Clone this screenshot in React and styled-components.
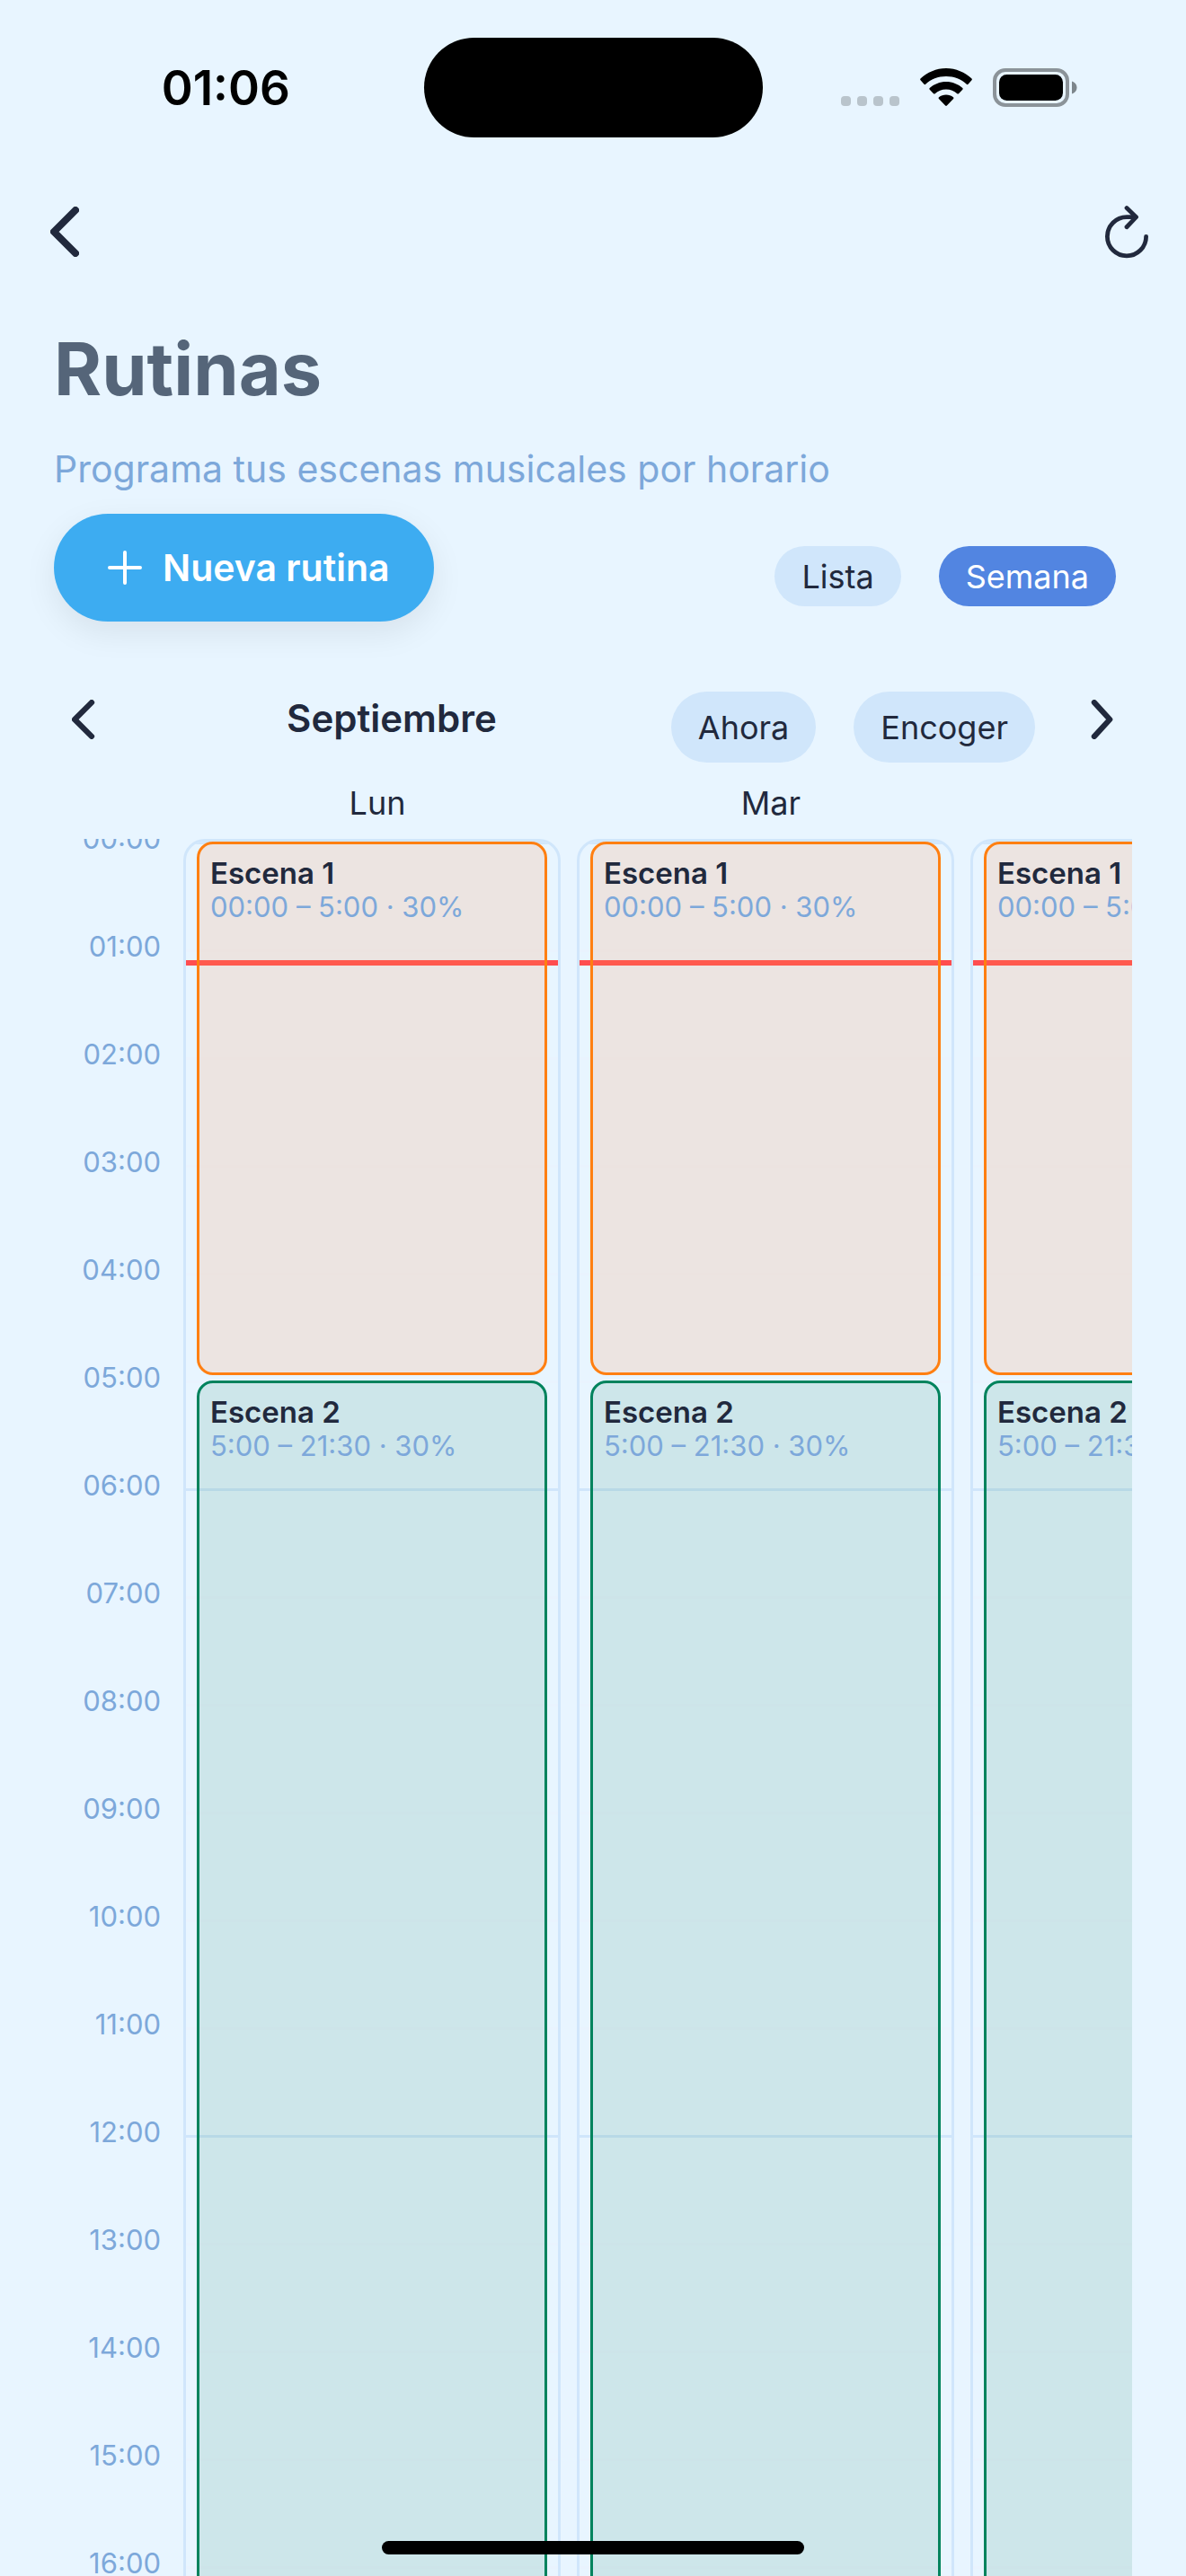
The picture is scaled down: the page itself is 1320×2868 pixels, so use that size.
import React, { useState } from "react";
import styled, { createGlobalStyle } from "styled-components";

const HOUR = 120;
const INK = "#21293d";
const SOFT = "#7da8da";
const LINE = "#d0e6fb";

const DAYS = ["Lun", "Mar", ""];
const HOURS = Array.from({ length: 17 }, (_, h) => h);
const SCENES = [
  { name: "Escena 1", start: 0, end: 5, detail: "00:00 – 5:00 · 30%", color: "#ff7f11", fill: "rgba(255, 148, 76, 0.17)" },
  { name: "Escena 2", start: 5, end: 21.5, detail: "5:00 – 21:30 · 30%", color: "#00835d", fill: "rgba(24, 131, 93, 0.13)" },
];
const NOW = 1.1;

const GlobalStyle = createGlobalStyle`
  *, *::before, *::after { box-sizing: border-box; }
  body {
    margin: 0;
    background: #e8f5ff;
    color: ${INK};
    font-family: Inter, "Liberation Sans", sans-serif;
  }
  button { font: inherit; color: inherit; border: 0; padding: 0; background: none; cursor: pointer; }
  h1, h2, h3, p { margin: 0; }
  svg { display: block; }
`;

const Screen = styled.div`
  height: 100vh;
  display: flex;
  flex-direction: column;
  overflow: hidden;
`;

const StatusBar = styled.header`
  flex: none;
  display: grid;
  grid-template-columns: 1fr 377px 1fr;
  align-items: center;
  height: 194px;
  color: #000;
`;

const Clock = styled.time`
  padding: 2px 0 0 31px;
  text-align: center;
  font-size: 53px;
  line-height: 64px;
  font-weight: 600;
`;

const Island = styled.div`
  height: 111px;
  border-radius: 56px;
  background: #000;
`;

const Indicators = styled.div`
  display: flex;
  align-items: flex-end;
  justify-content: flex-end;
  gap: 23px;
  padding-right: 121px;
`;

const Signal = styled.div`
  display: flex;
  gap: 7px;
  padding-bottom: 1px;
`;

const SignalDot = styled.span`
  width: 11px;
  height: 11px;
  border-radius: 4px;
  background: #b9c4cc;
`;

const NavBar = styled.nav`
  flex: none;
  display: flex;
  align-items: center;
  justify-content: space-between;
  height: 128px;
  padding: 0 42px 0 48px;
`;

const IconButton = styled.button`
  display: flex;
  align-items: center;
  justify-content: center;
  width: 48px;
  height: 64px;
`;

const Content = styled.main`
  flex: 1;
  min-height: 0;
  display: flex;
  flex-direction: column;
  padding: 38px 60px 0;
`;

const Title = styled.h1`
  font-size: 81px;
  line-height: 102px;
  font-weight: 700;
  color: #556579;
`;

const Subtitle = styled.p`
  padding: 34px 0 24px;
  font-size: 41px;
  line-height: 52px;
  color: ${SOFT};
`;

const Actions = styled.div`
  display: flex;
  align-items: flex-start;
  justify-content: space-between;
  padding-right: 18px;
`;

const PrimaryButton = styled.button`
  display: flex;
  align-items: center;
  gap: 23px;
  height: 120px;
  padding: 0 49px 0 60px;
  border-radius: 60px;
  background: #3dacf1;
  color: #fff;
  font-size: 41px;
  font-weight: 600;
  box-shadow: 0 12px 36px rgba(0, 0, 0, 0.08);
`;

const PillGroup = styled.div`
  display: flex;
  gap: 42px;
  padding-top: ${(p) => (p.$low ? "36px" : "0")};
`;

const Pill = styled.button`
  height: ${(p) => (p.$tall ? "79px" : "67px")};
  padding: 0 30px;
  border-radius: 40px;
  font-size: 36px;
  background: ${(p) => (p.$active ? "#5285e1" : LINE)};
  color: ${(p) => (p.$active ? "#fff" : INK)};
`;

const WeekBar = styled.div`
  display: flex;
  align-items: center;
  height: 79px;
  margin-top: 78px;
  padding: 0 9px;
`;

const Month = styled.h2`
  flex: 1;
  padding: 0 0 20px 8px;
  text-align: center;
  font-size: 42px;
  line-height: 52px;
  font-weight: 600;
`;

const WeekArrow = styled(IconButton)`
  margin: 0 0 18px ${(p) => (p.$end ? "51px" : "0")};
`;

const Calendar = styled.section`
  flex: 1;
  min-height: 0;
  display: grid;
  grid-template-columns: 144px minmax(0, 1fr);
  grid-template-rows: 85px minmax(0, 1fr);
  overflow: hidden;
`;

const DayNames = styled.div`
  grid-column: 2;
  display: flex;
  gap: 6px;
  padding-top: 20px;
  overflow: hidden;
`;

const DayName = styled.h3`
  flex: none;
  width: 432px;
  text-align: center;
  font-size: 36px;
  line-height: 50px;
  font-weight: 400;
`;

const HourList = styled.div`
  overflow: hidden;
`;

const HourLabel = styled.div`
  height: ${HOUR}px;
  margin-top: ${(p) => (p.$first ? "-20px" : "0")};
  padding-right: 25px;
  text-align: right;
  font-size: 31px;
  line-height: 40px;
  color: ${SOFT};
`;

const Days = styled.div`
  display: flex;
  gap: 18px;
  overflow: hidden;
`;

const Day = styled.div`
  position: relative;
  flex: none;
  width: 420px;
  height: ${HOUR * 24 + 6}px;
  border: 3px solid ${LINE};
  border-radius: 24px;
  overflow: hidden;
`;

const HourLine = styled.div`
  height: ${HOUR}px;
  border-top: 3px solid ${(p) => (p.$major ? LINE : "#e9f3fe")};
`;

const NowLine = styled.div`
  position: absolute;
  left: 0;
  right: 0;
  height: 6px;
  background: #ff4d4f;
`;

const Scene = styled.article`
  position: absolute;
  left: 12px;
  right: 12px;
  padding: 12px;
  border: 3px solid ${(p) => p.$color};
  border-radius: 18px;
  background: ${(p) => p.$fill};
`;

const SceneName = styled.h3`
  font-size: 33px;
  line-height: 40px;
  font-weight: 600;
`;

const SceneDetail = styled.p`
  font-size: 31px;
  line-height: 36px;
  color: ${SOFT};
  white-space: nowrap;
`;

const HomeIndicator = styled.div`
  position: fixed;
  left: 50%;
  bottom: 24px;
  width: 470px;
  height: 15px;
  margin-left: -235px;
  border-radius: 8px;
  background: #000;
`;

function Chevron({ size, right }) {
  const d = right ? "M5 4 L27 28 L5 52" : "M28 4 L4 28 L28 52";
  return (
    <svg width={(size * 32) / 56} height={size} viewBox="0 0 32 56" fill="none" stroke={INK} strokeWidth="8" strokeLinecap="round" strokeLinejoin="round" aria-hidden="true">
      <path d={d} />
    </svg>
  );
}

function Refresh() {
  return (
    <svg width="50" height="60" viewBox="0 0 50 60" fill="none" stroke={INK} strokeWidth="5" strokeLinecap="round" strokeLinejoin="round" aria-hidden="true">
      <path d="M35 13 H25 A22.5 22.5 0 1 0 47.5 35.5" />
      <path d="M25 2.5 L36 13 L25 24.5" />
    </svg>
  );
}

function Wifi() {
  return (
    <svg width="58" height="43" viewBox="0 0 58 43" aria-hidden="true">
      <path d="M29 0 C40 0 50 4.500 57.500 11.500 C58 12 58 12.700 57.500 13.200 L53.500 17.800 C53 18.300 52.300 18.300 51.800 17.800 C46 12.300 38 9 29 9 C20 9 12 12.300 6.200 17.800 C5.700 18.300 5 18.300 4.500 17.800 L.5 13.200 C0 12.700 0 12 .5 11.500 C8 4.500 18 0 29 0Z" />
      <path d="M29 15 C36 15 42.500 17.700 47.300 22 C47.800 22.500 47.800 23.200 47.300 23.700 L43 28.200 C42.500 28.700 41.800 28.700 41.300 28.200 C38 25.300 33.700 23.500 29 23.500 C24.300 23.500 20 25.300 16.700 28.200 C16.200 28.700 15.500 28.700 15 28.200 L10.700 23.700 C10.200 23.200 10.200 22.500 10.700 22 C15.500 17.700 22 15 29 15Z" />
      <path d="M29 29.500 C32 29.500 34.800 30.500 37 32.200 C37.600 32.700 37.600 33.400 37.100 33.900 L29.900 41.600 C29.400 42.100 28.600 42.100 28.100 41.600 L20.900 33.900 C20.400 33.400 20.400 32.700 21 32.200 C23.200 30.500 26 29.500 29 29.500Z" />
    </svg>
  );
}

function Battery() {
  return (
    <svg width="94" height="43" viewBox="0 0 94 43" aria-hidden="true">
      <rect x="2" y="2" width="81" height="39" rx="12" fill="none" stroke="#8b9399" strokeWidth="4" />
      <rect x="7" y="7" width="71" height="29" rx="8.500" />
      <path d="M88 14.500 C91 15.500 93.500 18 93.500 21.500 C93.500 25 91 27.500 88 28.500Z" fill="#7d868c" />
    </svg>
  );
}

function Plus() {
  return (
    <svg width="38" height="38" viewBox="0 0 38 38" fill="none" stroke="#fff" strokeWidth="4" strokeLinecap="round" aria-hidden="true">
      <path d="M19 2 V36 M2 19 H36" />
    </svg>
  );
}

export default function App() {
  const [view, setView] = useState("Semana");
  return (
    <Screen>
      <GlobalStyle />
      <StatusBar>
        <Clock>01:06</Clock>
        <Island />
        <Indicators>
          <Signal>
            {[0, 1, 2, 3].map((i) => (
              <SignalDot key={i} />
            ))}
          </Signal>
          <Wifi />
          <Battery />
        </Indicators>
      </StatusBar>

      <NavBar>
        <IconButton aria-label="Volver">
          <Chevron size={56} />
        </IconButton>
        <IconButton aria-label="Actualizar">
          <Refresh />
        </IconButton>
      </NavBar>

      <Content>
        <Title>Rutinas</Title>
        <Subtitle>Programa tus escenas musicales por horario</Subtitle>
        <Actions>
          <PrimaryButton>
            <Plus />
            Nueva rutina
          </PrimaryButton>
          <PillGroup $low>
            {["Lista", "Semana"].map((name) => (
              <Pill key={name} $active={view === name} aria-pressed={view === name} onClick={() => setView(name)}>
                {name}
              </Pill>
            ))}
          </PillGroup>
        </Actions>

        <WeekBar>
          <WeekArrow aria-label="Semana anterior">
            <Chevron size={44} />
          </WeekArrow>
          <Month>Septiembre</Month>
          <PillGroup>
            <Pill $tall>Ahora</Pill>
            <Pill $tall>Encoger</Pill>
          </PillGroup>
          <WeekArrow $end aria-label="Semana siguiente">
            <Chevron size={44} right />
          </WeekArrow>
        </WeekBar>

        <Calendar>
          <DayNames>
            {DAYS.filter(Boolean).map((day) => (
              <DayName key={day}>{day}</DayName>
            ))}
          </DayNames>
          <HourList>
            {HOURS.map((h) => (
              <HourLabel key={h} $first={h === 0}>
                {String(h).padStart(2, "0")}:00
              </HourLabel>
            ))}
          </HourList>
          <Days>
            {DAYS.map((day) => (
              <Day key={day}>
                {HOURS.map((h) => (
                  <HourLine key={h} $major={h % 6 === 0} />
                ))}
                <NowLine style={{ top: NOW * HOUR }} />
                {SCENES.map((s) => (
                  <Scene key={s.name} $color={s.color} $fill={s.fill} style={{ top: s.start * HOUR, height: (s.end - s.start) * HOUR - 6 }}>
                    <SceneName>{s.name}</SceneName>
                    <SceneDetail>{s.detail}</SceneDetail>
                  </Scene>
                ))}
              </Day>
            ))}
          </Days>
        </Calendar>
      </Content>
      <HomeIndicator />
    </Screen>
  );
}
